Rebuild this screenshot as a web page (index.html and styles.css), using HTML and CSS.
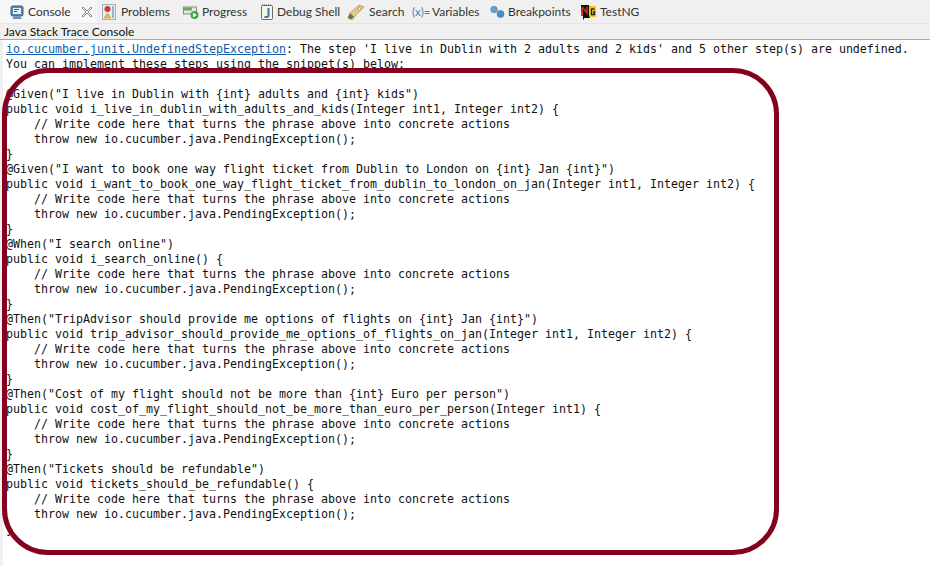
FILE: index.html
```html
<!DOCTYPE html>
<html lang="en">
<head>
<meta charset="utf-8">
<title>Java Stack Trace Console</title>
<link rel="stylesheet" href="styles.css">
</head>
<body>
<div class="view">
  <div class="tabs">
    <div class="tab tab-active">
      <svg class="ico" viewBox="0 0 16 16"><path d="M2 3.500Q2 2 3.500 2h9Q14 2 14 3.500v7q0 1.500-1.500 1.500h-9Q2 12 2 10.500Z" fill="#5b86b8" stroke="#3d5f88"/><rect x="4" y="4" width="8" height="6" fill="#e4eef8"/><rect x="5" y="5" width="5" height="1" fill="#3d5f88"/><rect x="5" y="7" width="3" height="1" fill="#3d5f88"/><path d="M3 15h10l-2-2.500H5Z" fill="#6d8fb5"/></svg>
      <span>Console</span>
      <svg class="close" viewBox="0 0 12 12"><path d="M2 1 6 5 10 1 11 2 7 6 11 10 10 11 6 7 2 11 1 10 5 6 1 2Z" fill="#fff" stroke="#8a8a8a"/></svg>
    </div>
    <div class="tab tab-problems">
      <svg class="ico" viewBox="0 0 16 16"><rect x="1.500" y=".5" width="13" height="15" fill="#e8edf4" stroke="#a3afc0"/><rect x="11" y="2" width="2" height="12" fill="#9fb2c9"/><circle cx="6.500" cy="5" r="3" fill="#d9342b"/><path d="M3 14 6.500 9 10 14Z" fill="#f2b632" stroke="#c98f1f" stroke-width=".5"/></svg>
      <span>Problems</span>
    </div>
    <div class="tab tab-progress">
      <svg class="ico" viewBox="0 0 16 16"><rect x=".5" y="3" width="13" height="7" fill="#e4e8e0" stroke="#7f8f7a"/><rect x="1" y="3.500" width="8" height="3" fill="#6fa75f"/><circle cx="11.500" cy="11" r="4" fill="#3fa845"/><path d="M10 8.800 14 11 10 13.200Z" fill="#fff"/></svg>
      <span>Progress</span>
    </div>
    <div class="tab tab-debug">
      <svg class="ico" viewBox="0 0 16 16"><rect x="2.500" y="1.500" width="11" height="14" rx="1" fill="#f6f4e8" stroke="#6d6d5c"/><path d="M3 1h10" stroke="#555" stroke-dasharray="1 1"/><path d="M9.500 4v7q0 2-2 2H5.500" fill="none" stroke="#3f6fb5" stroke-width="2"/></svg>
      <span>Debug Shell</span>
    </div>
    <div class="tab tab-search">
      <svg class="ico ico-wide" viewBox="0 0 18 16"><path d="M1 14 3 9 12 1 17 3 9 11 5 16Z" fill="#e3c88c" stroke="#a98b4f" stroke-width=".7"/><path d="M1 14 3 9 7 13 4 15Z" fill="#7d6a48"/><circle cx="12.500" cy="5" r="1.500" fill="#fff2c8" stroke="#8a6a2f" stroke-width=".5"/></svg>
      <span>Search</span>
    </div>
    <div class="tab tab-vars">
      <span class="vars">(x)=</span>
      <span>Variables</span>
    </div>
    <div class="tab tab-breaks">
      <svg class="ico" viewBox="0 0 16 16"><circle cx="5" cy="5.500" r="3.300" fill="#6b9fd0" stroke="#4a789f" stroke-width=".6"/><circle cx="11.500" cy="10" r="3.500" fill="#4f8cc4" stroke="#3e6f9f" stroke-width=".6"/></svg>
      <span>Breakpoints</span>
    </div>
    <div class="tab">
      <svg class="ico" viewBox="0 0 16 16"><path d="M1 1h8v1h1v12H4v1.500H3V8H1Z" fill="#111"/><rect x="9" y="2" width="7" height="11" rx="1" fill="#f5c518"/><path d="M2 12V4h1L7 9V3" fill="none" stroke="#c92a1c" stroke-width="1.800"/><path d="M14.500 5h-3v5.500h3V8H13" fill="none" stroke="#222" stroke-width="1.300"/></svg>
      <span>TestNG</span>
    </div>
  </div>
  <div class="title">Java Stack Trace Console</div>
  <div class="console">
<div class="code first"><a class="link">io.cucumber.junit.UndefinedStepException</a><span>: The step 'I live in Dublin with 2 adults and 2 kids' and 5 other step(s) are undefined.</span></div>
<pre class="code">You can implement these steps using the snippet(s) below:

@Given("I live in Dublin with {int} adults and {int} kids")
public void i_live_in_dublin_with_adults_and_kids(Integer int1, Integer int2) {
    // Write code here that turns the phrase above into concrete actions
    throw new io.cucumber.java.PendingException();
}
@Given("I want to book one way flight ticket from Dublin to London on {int} Jan {int}")
public void i_want_to_book_one_way_flight_ticket_from_dublin_to_london_on_jan(Integer int1, Integer int2) {
    // Write code here that turns the phrase above into concrete actions
    throw new io.cucumber.java.PendingException();
}
@When("I search online")
public void i_search_online() {
    // Write code here that turns the phrase above into concrete actions
    throw new io.cucumber.java.PendingException();
}
@Then("TripAdvisor should provide me options of flights on {int} Jan {int}")
public void trip_advisor_should_provide_me_options_of_flights_on_jan(Integer int1, Integer int2) {
    // Write code here that turns the phrase above into concrete actions
    throw new io.cucumber.java.PendingException();
}
@Then("Cost of my flight should not be more than {int} Euro per person")
public void cost_of_my_flight_should_not_be_more_than_euro_per_person(Integer int1) {
    // Write code here that turns the phrase above into concrete actions
    throw new io.cucumber.java.PendingException();
}
@Then("Tickets should be refundable")
public void tickets_should_be_refundable() {
    // Write code here that turns the phrase above into concrete actions
    throw new io.cucumber.java.PendingException();
}</pre>
    <div class="ring"></div>
  </div>
</div>
</body>
</html>
```
FILE: styles.css
```css
html, body { margin: 0; padding: 0; background: #fff; }
body { width: 930px; height: 566px; overflow: hidden; }
.view { display: flex; flex-direction: column; height: 566px; }
.tabs {
  display: flex; align-items: stretch; height: 24px; box-sizing: border-box;
  background: #f0f0f0; border-bottom: 1px solid #e6e6e6;
  font: 12px/23px Lato, "Open Sans", sans-serif; color: #333;
}
.tab { display: flex; align-items: center; gap: 4px; white-space: nowrap; }
.tab-active {
  width: 97px; box-sizing: border-box; padding-left: 9px; background: #f7f7f7;
  gap: 3px; margin-right: 4px;
}
.tab-problems { width: 82px; }
.tab-progress { width: 76px; gap: 3px; }
.tab-debug { width: 88px; gap: 2px; }
.tab-search { width: 65px; gap: 4px; }
.tab-vars { width: 77px; gap: 3px; }
.tab-breaks { width: 91px; gap: 3px; }
.ico { width: 16px; height: 16px; flex: none; }
.ico-wide { width: 18px; }
.close { width: 12px; height: 12px; margin-left: 7px; }
.vars { color: #3f7fb5; font-size: 11.5px; width: 17px; }
.title {
  height: 15px; background: #f0f0f0; border-bottom: 1px solid #a8a8a8;
  font: 12px/16px Lato, "Open Sans", sans-serif; color: #111; padding-left: 4px;
}
.console { position: relative; flex: 1; background: #fff; border-left: 3px solid #f0f0f0; }
.code {
  margin: 0; padding: 0 0 0 3px; font: 11.63px/15px "DejaVu Sans Mono", monospace; color: #111;
}
.first { padding-top: 2px; white-space: pre; }
.link { color: #0b5cad; text-decoration: underline; }
.ring {
  position: absolute; left: -1px; top: 28px; width: 767px; height: 477px;
  border: 5px solid #860020; border-radius: 46px;
}
```
